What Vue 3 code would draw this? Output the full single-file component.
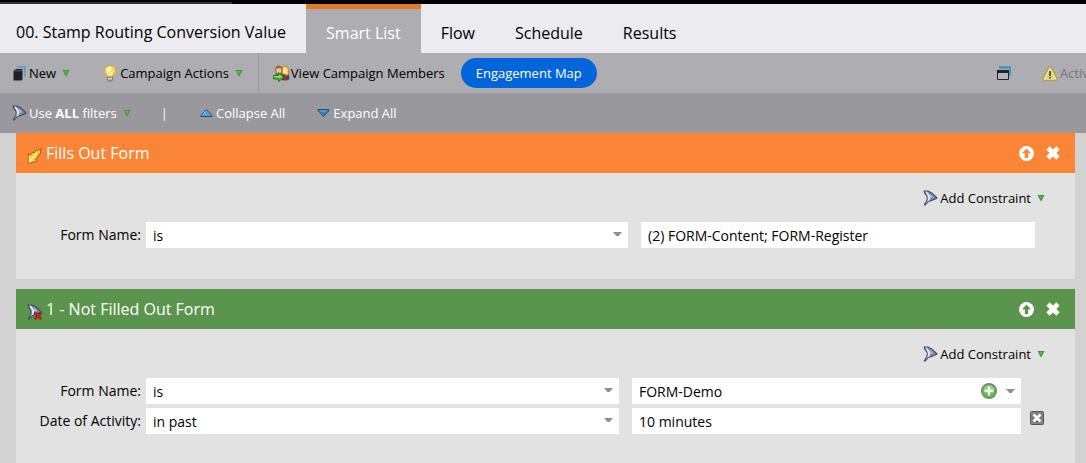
<script setup>
import { ref, reactive, h } from 'vue'

const tabs = ['Smart List', 'Flow', 'Schedule', 'Results']
const activeTab = ref('Smart List')

const cards = reactive([
  {
    id: 'fills',
    title: 'Fills Out Form',
    kind: 'trigger',
    rows: [
      { label: 'Form Name:', operator: 'is', value: '(2) FORM-Content; FORM-Register' },
    ],
  },
  {
    id: 'notfilled',
    title: '1 - Not Filled Out Form',
    kind: 'filter',
    rows: [
      { label: 'Form Name:', operator: 'is', value: 'FORM-Demo', picker: true },
      { label: 'Date of Activity:', operator: 'in past', value: '10 minutes', removable: true },
    ],
  },
])

const Caret = () =>
  h('svg', { width: 8, height: 8, viewBox: '0 0 8 8', 'aria-hidden': 'true' }, [
    h('path', { d: 'M.5 1h7L5 6 4 7.500 3 6z', fill: '#3f9a35' }),
    h('path', { d: 'M2 2h3.500L4 5z', fill: '#5fbe48' }),
  ])

const funnelShapes = () => [
  h('path', { d: 'M.5.500h4.500L9 2.500l5.500 5v1L10 10.500l-4.500 1.500L2.500 15.500.500 15.300 3.500 10 3.800 7 1 3z', fill: '#3d4a69' }),
  h('path', { d: 'M4.500 1.500 8.500 3.500 13 7.700 9.500 9.500 6 10.500z', fill: '#7d8fb3' }),
  h('path', { d: 'M2 1.500h2L7.500 6.500 6.500 10.500 4.500 11.500 2 14.500 4.700 10V6.500z', fill: '#dfe6f1' }),
  h('path', { d: 'M7 3.500 9.500 6.500 8 8.500z', fill: '#b3c0d8' }),
]

const Funnel = () =>
  h('svg', { width: 15, height: 16, viewBox: '0 0 15 16', 'aria-hidden': 'true' }, funnelShapes())

const FunnelRemoved = () =>
  h('svg', { width: 16, height: 16, viewBox: '0 0 16 16', 'aria-hidden': 'true' }, [
    ...funnelShapes(),
    h('path', { d: 'm7.500 8.500 7 6.500m0-6.500-7 6.500', stroke: '#7d1d1d', 'stroke-width': 2.6 }),
    h('path', { d: 'm7.500 8.500 7 6.500m0-6.500-7 6.500', stroke: '#d02a28', 'stroke-width': 1.4 }),
  ])

const Arrow = () =>
  h('svg', { width: 10, height: 5, viewBox: '0 0 10 5', 'aria-hidden': 'true' }, [
    h('path', { d: 'M0 0h9L5.500 4h-2z', fill: '#8d8d8d' }),
  ])
</script>

<template>
  <div class="app">
    <div class="strip"><div class="strip-line"></div></div>

    <header class="tabs">
      <h1>00. Stamp Routing Conversion Value</h1>
      <nav>
        <button
          v-for="tab in tabs"
          :key="tab"
          type="button"
          class="tab"
          :class="{ active: tab === activeTab }"
          @click="activeTab = tab"
        >{{ tab }}</button>
      </nav>
    </header>

    <div class="bar toolbar">
      <button type="button" class="tool new">
        <svg width="13" height="15" viewBox="0 0 13 15" aria-hidden="true">
          <path d="M4 1h8v10" fill="none" stroke="#4f9fd0" stroke-width="1.500" />
          <path d="M1 4.500 3 3h6.500v10L8.500 14.500H.500V5z" fill="#202024" />
          <path d="M1.500 4.800h6.800l1-1" fill="none" stroke="#77777c" stroke-width=".8" />
        </svg>
        <span>New</span><Caret />
      </button>
      <button type="button" class="tool actions">
        <svg width="12" height="17" viewBox="0 0 12 17" aria-hidden="true">
          <path d="M6 .5a5.300 5.300 0 0 0-3.200 9.600L3.500 12h5l.7-1.900A5.300 5.300 0 0 0 6 .5z" fill="#fbdc68" stroke="#d9a93c" />
          <path d="M4.500 2.200a3 3 0 0 0-1.500 4c1.500 1.500 3.500 0 4-2S6 1.800 4.500 2.200z" fill="#fffbd9" />
          <path d="M5 7v5M7 7v5" stroke="#fff3ac" />
          <path d="M3.500 12h5v2.500L7.500 16h-3l-1-1.500z" fill="#a3a3a0" stroke="#67676a" stroke-width=".8" />
          <path d="M4 13.700h4" stroke="#e8e8e8" />
        </svg>
        <span>Campaign Actions</span><Caret />
      </button>
      <button type="button" class="tool members">
        <svg width="17" height="17" viewBox="0 0 17 17" aria-hidden="true">
          <path d="M8.500 9.500h7l.5 4.500-2 1H9z" fill="#b91f28" stroke="#801820" stroke-width=".7" />
          <path d="M12.500 10h3.200v4.500h-3.200z" fill="#294f9b" />
          <path d="M9.500 2.500C10.500.5 15 .8 15.300 4l.4 5-2 1.500L9.500 8z" fill="#f6d34a" stroke="#aa7924" stroke-width=".8" />
          <ellipse cx="11.700" cy="6" rx="2" ry="3" fill="#ffe5a2" />
          <path d="M2 9c0-2 7-2 8 0v4H2z" fill="#667b46" />
          <ellipse cx="5.800" cy="4.900" rx="3.200" ry="4" fill="#f1c08c" stroke="#7a552f" stroke-width=".8" />
          <path d="M2.500 4C2.500.2 9 .2 9.200 4L8 3.300 5 3z" fill="#8b6239" />
          <path d="M.7 10.500h5V7.700l5 4.500-5 4.300V14h-5z" fill="#52c53b" stroke="#1b701d" />
          <path d="M1.500 11.500h5V10l2 2" fill="none" stroke="#a8ee82" />
        </svg>
        <span>View Campaign Members</span>
      </button>
      <button type="button" class="pill">Engagement Map</button>
      <button type="button" class="tool window" aria-label="Open in new window">
        <svg width="14" height="14" viewBox="0 0 14 14" aria-hidden="true">
          <path d="M2 0h12v10h-2V3H2z" fill="#4f98c5" />
          <path d="M.5 4.500h11v9H.5z" fill="#b5b5b8" stroke="#222226" />
          <path d="M0 4h12v3H0z" fill="#222226" />
        </svg>
      </button>
      <button type="button" class="tool activate" disabled>
        <svg width="16" height="15" viewBox="0 0 16 15" aria-hidden="true">
          <path d="M7 1Q8 0 9 1l6.300 11.500q.2 1.500-1 1.700H1.700q-1.200-.2-1-1.700z" fill="#dcd278" stroke="#a99534" />
          <path d="M8 2.500 13.500 13h-11z" fill="none" stroke="#f0ebae" />
          <path d="M8 5v5M8 11v1.500" stroke="#4e4a31" stroke-width="1.700" />
        </svg>
        <span>Activate</span>
      </button>
    </div>

    <div class="bar subbar">
      <button type="button" class="tool filters">
        <Funnel /><span>Use <b>ALL</b> filters</span><Caret />
      </button>
      <span class="divider">|</span>
      <button type="button" class="tool collapse">
        <svg width="13" height="8" viewBox="0 0 13 8" aria-hidden="true">
          <path d="M6.500.6 12 6.500v1H1v-1z" fill="#4aa2dd" stroke="#1d527f" />
          <path d="m6 2.300-3 3.400" stroke="#9ad7f5" />
        </svg>
        <span>Collapse All</span>
      </button>
      <button type="button" class="tool expand">
        <svg width="13" height="8" viewBox="0 0 13 8" aria-hidden="true">
          <path d="M1 .5h11v1L6.500 7.400 1 1.500z" fill="#3382b8" stroke="#1d527f" />
          <path d="M3 2h6" stroke="#66add8" />
        </svg>
        <span>Expand All</span>
      </button>
    </div>

    <main>
      <section v-for="card in cards" :key="card.id" class="card" :class="card.kind">
        <div class="card-head">
          <svg v-if="card.kind === 'trigger'" class="kind-icon" width="15" height="16" viewBox="0 0 15 16" aria-hidden="true">
            <path d="M.7 5.500 3 7l2.500-3 1.500.5L9 2l1 .5L14 .5 12.800 4l.5 1-3 2.500.5 1.500L8 11l2 2-2 .5-7 2z" fill="#f8c93c" stroke="#98651a" />
            <path d="M2 8v5.500L9.500 5" fill="none" stroke="#ffef9c" stroke-width="1.300" />
          </svg>
          <FunnelRemoved v-else class="kind-icon" />
          <h2>{{ card.title }}</h2>
          <button type="button" class="head-btn" aria-label="Collapse">
            <svg width="15" height="15" viewBox="0 0 15 15" aria-hidden="true">
              <circle cx="7.500" cy="7.500" r="7.500" fill="#fff" />
              <path class="cut" d="M7.500 2.500 12 7.200H9.200V12H5.800V7.200H3z" />
            </svg>
          </button>
          <button type="button" class="head-btn" aria-label="Remove">
            <svg width="14" height="14" viewBox="0 0 14 14" aria-hidden="true">
              <path d="m2 2 10 10M12 2 2 12" stroke="#fff" stroke-width="4.600" />
            </svg>
          </button>
        </div>

        <div class="card-body">
          <button type="button" class="tool constraint">
            <Funnel /><span>Add Constraint</span><Caret />
          </button>
          <div v-for="(row, i) in card.rows" :key="row.label" class="row">
            <label :for="`${card.id}-op-${i}`">{{ row.label }}</label>
            <div class="field">
              <select :id="`${card.id}-op-${i}`" v-model="row.operator">
                <option>{{ row.operator }}</option>
              </select>
              <Arrow class="select-arrow" />
            </div>
            <div class="field value">
              <input v-model="row.value" type="text" :aria-label="`${row.label} value`" />
              <template v-if="row.picker">
                <button type="button" class="mini" aria-label="Add value">
                  <svg width="16" height="16" viewBox="0 0 16 16" aria-hidden="true">
                    <circle cx="8" cy="8" r="7.300" fill="#62bd4b" stroke="#75837a" stroke-width="1.400" />
                    <path d="M2.500 7a5.600 5.600 0 0 1 11 0z" fill="#92d67c" />
                    <path d="M8 3.500v9M3.500 8h9" stroke="#fff" stroke-width="2.400" />
                  </svg>
                </button>
                <button type="button" class="mini drop" aria-label="Show values"><Arrow /></button>
              </template>
            </div>
            <button v-if="row.removable" type="button" class="mini remove" aria-label="Remove constraint">
              <svg width="14" height="14" viewBox="0 0 14 14" aria-hidden="true">
                <rect x=".5" y=".5" width="13" height="13" rx="1" fill="#858585" stroke="#555" />
                <path d="m3.500 3.500 7 7m0-7-7 7" stroke="#5a5a5a" stroke-width="4.400" />
                <path d="m3.500 3.500 7 7m0-7-7 7" stroke="#fff" stroke-width="3" />
              </svg>
            </button>
          </div>
        </div>
      </section>
    </main>
  </div>
</template>

<style>
body {
  background: #d2d2d2;
  overflow: hidden;
}
</style>

<style scoped>
.app {
  font-family: "Open Sans", "Noto Sans", sans-serif;
  font-size: 13px;
  color: #000;
}
button,
input,
select {
  box-sizing: border-box;
  font: inherit;
  color: inherit;
  border: 0;
  margin: 0;
  padding: 0;
  background: none;
}
button {
  white-space: nowrap;
}
svg {
  flex: none;
  display: block;
}
.strip {
  height: 4px;
  padding-top: 2px;
  box-sizing: border-box;
  background: #000;
}
.strip-line {
  width: 232px;
  height: 2px;
  background: #333336;
}
.tabs {
  display: flex;
  height: 49px;
  padding-left: 16px;
  background: #ebebf0;
  font-size: 16px;
}
h1 {
  margin: 0 20px 0 0;
  font-size: 16px;
  font-weight: 400;
  line-height: 57px;
  white-space: nowrap;
}
nav {
  display: flex;
}
.tab {
  padding: 3px 20px 0;
  border-top: 5px solid transparent;
}
.tab.active {
  border-top-color: #e57a25;
  background: #aeadb1;
  color: #fff;
}
.bar {
  display: flex;
  align-items: center;
  height: 40px;
  overflow: hidden;
}
.toolbar {
  background: #aeadb1;
}
.subbar {
  background: #99989c;
  color: #fff;
}
.tool {
  display: flex;
  align-items: center;
}
.tool span + svg {
  margin-left: 6px;
}
.new {
  padding-left: 13px;
}
.new span {
  margin-left: 3px;
}
.actions {
  margin-left: 34px;
  padding-right: 15px;
  height: 40px;
  border-right: 1px solid #98979b;
}
.actions span {
  margin-left: 4px;
}
.members {
  margin-left: 14px;
}
.members span {
  margin-left: 1px;
}
.pill {
  height: 30px;
  margin-left: 16px;
  padding: 0 15px;
  border-radius: 15px;
  background: #0265dc;
  color: #fff;
  font-weight: 500;
}
.window {
  margin-left: auto;
}
.activate {
  width: 44px;
  margin-left: 31px;
  overflow: hidden;
  color: #77767a;
}
.activate span {
  margin-left: 2px;
}
.filters {
  padding-left: 12px;
}
.filters span,
.constraint span {
  margin-left: 2px;
}
.divider {
  margin: 0 32px 0 30px;
}
.collapse span,
.expand span {
  margin-left: 3px;
}
.expand {
  margin-left: 32px;
}
main {
  display: flex;
  flex-direction: column;
  gap: 10px;
  padding: 0 11px 0 16px;
}
.card {
  background: #e2e2e2;
}
.trigger {
  --accent: #fa8537;
  --inset: 40px;
  --columns: 130px 482fr 13px 394fr;
}
.filter {
  --accent: #5b944c;
  --inset: 54px;
  --columns: 130px 473fr 13px 389fr;
}
.card-head {
  display: flex;
  align-items: center;
  height: 40px;
  padding: 0 15px 0 11px;
  background: var(--accent);
  color: #fff;
}
.kind-icon {
  flex: none;
  display: block;
  width: 16px;
  margin-top: 5px;
}
h2 {
  flex: 1;
  margin: 0 0 0 3px;
  font-size: 16px;
  font-weight: 400;
}
.head-btn + .head-btn {
  margin-left: 12px;
}
.cut {
  fill: var(--accent);
}
.card-body {
  display: flex;
  flex-direction: column;
  gap: 4px;
  padding: 15px 0 31px;
}
.constraint {
  align-self: flex-end;
  height: 19px;
  margin: 0 30px 11px 0;
}
.row {
  display: grid;
  grid-template-columns: var(--columns);
  position: relative;
  padding-right: var(--inset);
  font-size: 14px;
}
.row label {
  padding-right: 5px;
  line-height: 26px;
  text-align: right;
}
.field {
  display: flex;
  align-items: center;
  position: relative;
  height: 26px;
  background: #fff;
}
.value {
  grid-column: 4;
}
.field select,
.field input {
  flex: 1;
  min-width: 0;
  height: 26px;
  padding: 1px 7px 0;
  appearance: none;
  outline: 0;
}
.select-arrow {
  position: absolute;
  right: 5px;
  top: 10px;
  pointer-events: none;
}
.drop {
  margin: 0 5px 0 9px;
}
.remove {
  position: absolute;
  right: 31px;
  top: 3px;
}
</style>
